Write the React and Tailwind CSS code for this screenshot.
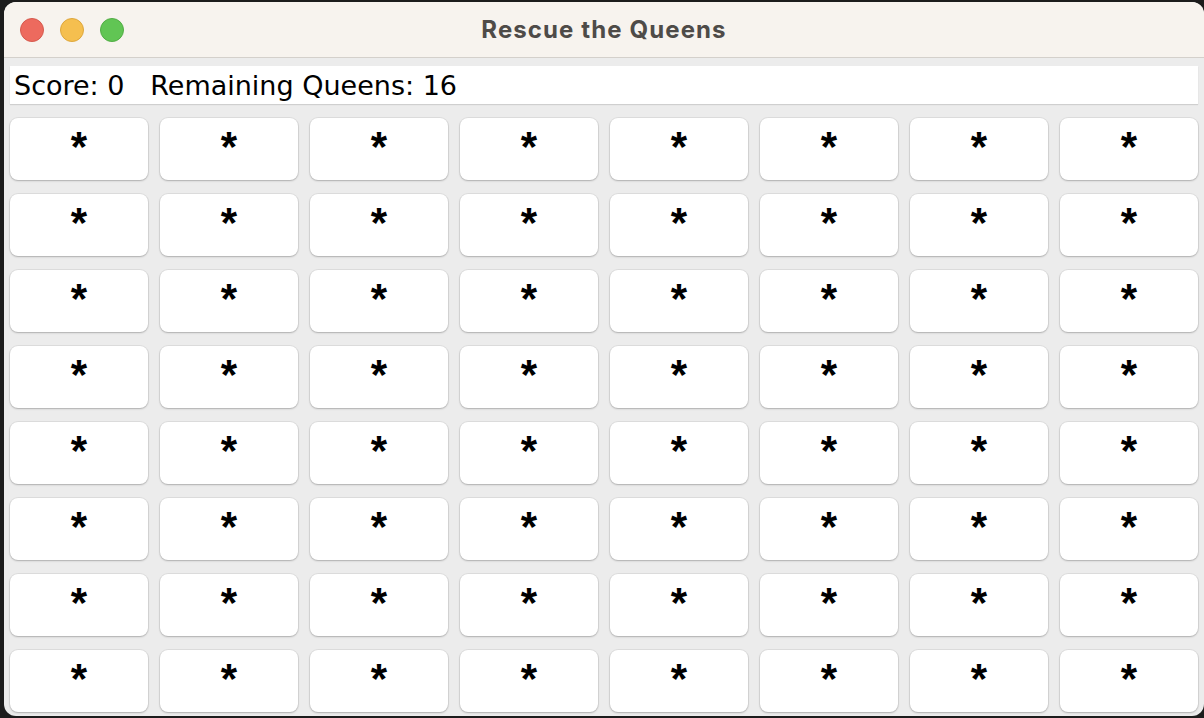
const ROWS = 8;
const COLS = 8;

function TrafficLights() {
  return (
    <div className="absolute left-[16px] top-0 h-full flex items-center gap-[16px]">
      <span className="w-[24px] h-[24px] rounded-full bg-[#ed6a5e] border border-[#d65a4e]" />
      <span className="w-[24px] h-[24px] rounded-full bg-[#f5bf4f] border border-[#dea73c]" />
      <span className="w-[24px] h-[24px] rounded-full bg-[#61c554] border border-[#52ad45]" />
    </div>
  );
}

function Cell() {
  return (
    <button className="h-[62px] rounded-[8px] bg-white shadow-[0_0_0_1px_rgba(0,0,0,0.06),0_1px_2px_rgba(0,0,0,0.22)] flex justify-center pt-[8px] text-black text-[42px] leading-[42px] font-bold font-['Liberation_Sans',Arial,sans-serif]">
      *
    </button>
  );
}

export default function App() {
  const cells = Array.from({ length: ROWS * COLS });

  return (
    <div className="w-[1204px] h-[718px] bg-[#1c1c1c] pl-[4px] pt-[2px] pb-[2px] overflow-hidden">
      <div className="h-full rounded-[12px] overflow-hidden bg-[#ececec] flex flex-col">
        {/* title bar */}
        <div className="relative h-[56px] shrink-0 bg-[#f7f3ee] border-b border-[#d4d0cb] flex items-center justify-center">
          <TrafficLights />
          <span className="text-[24px] font-bold tracking-[1.1px] text-[#4e4b48] font-['Inter','Noto_Sans',sans-serif]">
            Rescue the Queens
          </span>
        </div>

        {/* content */}
        <div className="flex flex-col gap-[14px] px-[6px] pt-[8px]">
          <div className="h-[38px] bg-white shadow-[0_1px_1px_rgba(0,0,0,0.12)] flex items-center px-[4px] pt-[2px]">
            <span className="whitespace-pre text-[27px] text-black font-['DejaVu_Sans',sans-serif]">
              {'Score: 0   Remaining Queens: 16'}
            </span>
          </div>

          <div className="grid grid-cols-8 gap-x-[12px] gap-y-[14px]">
            {cells.map((_, i) => (
              <Cell key={i} />
            ))}
          </div>
        </div>
      </div>
    </div>
  );
}
